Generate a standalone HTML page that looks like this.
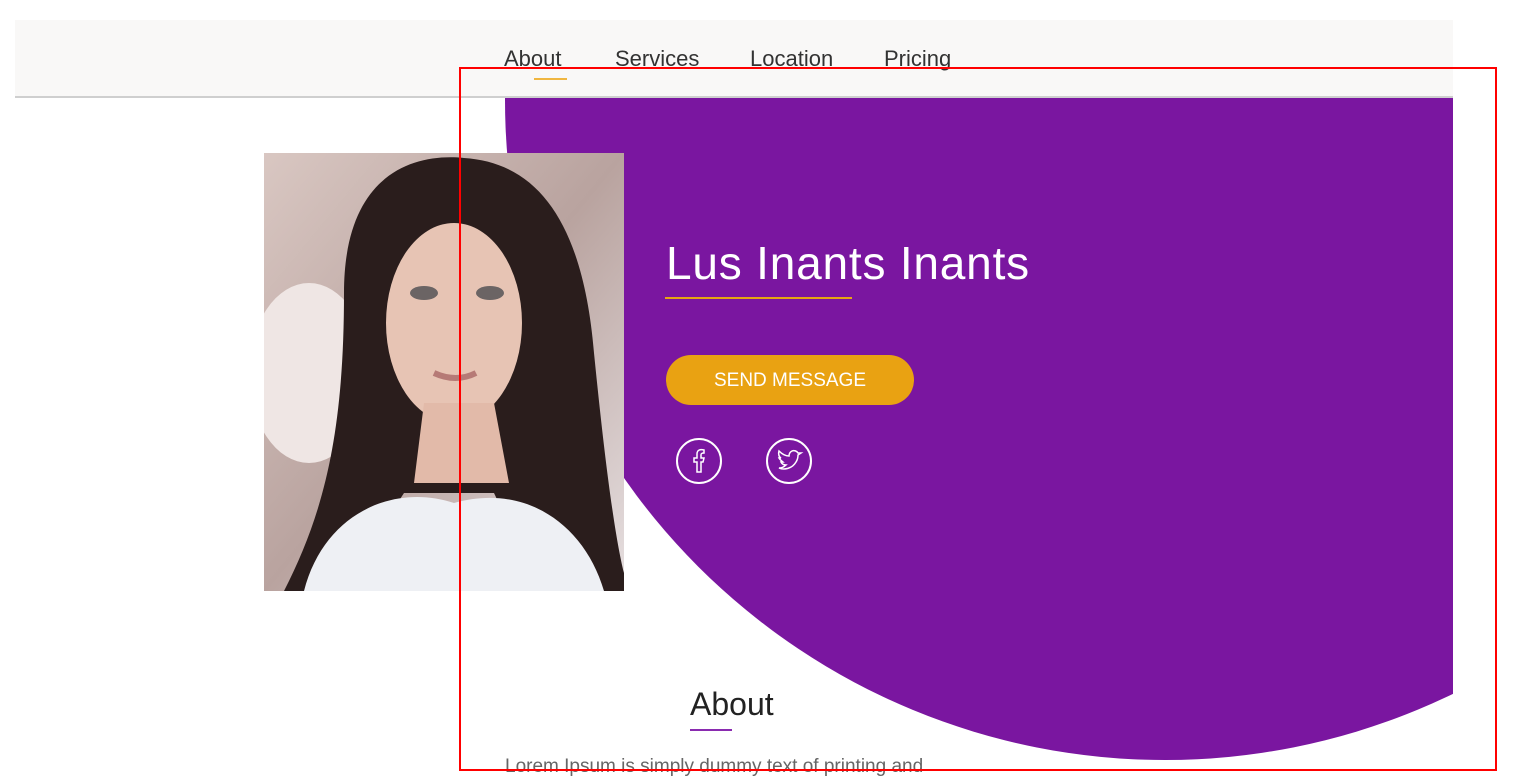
<!DOCTYPE html>
<html><head><meta charset="utf-8"><style>
html,body{margin:0;padding:0;width:1536px;height:773px;overflow:hidden;background:#fff;font-family:"Liberation Sans",sans-serif}
.wrap{position:absolute;left:15px;top:20px;width:1438px;height:753px;overflow:hidden}
.hdr{position:absolute;left:0;top:0;width:1438px;height:76px;background:#f9f8f7;border-bottom:2px solid #cfcfcf;z-index:2}
.nav a{position:absolute;top:26px;font-size:22px;color:#333;text-decoration:none}
.circle{position:absolute;left:490px;top:-580px;width:1320px;height:1320px;border-radius:50%;background:#7a16a0}
.title{position:absolute;left:666px;top:236px;font-size:46px;letter-spacing:0.8px;color:#fff;z-index:3}
.uline{position:absolute;left:665px;top:297px;width:187px;height:2px;background:#e6a612;z-index:3}
.btn{position:absolute;left:666px;top:355px;width:248px;height:50px;border-radius:25px;background:#e9a212;color:#fff;font-size:19px;text-align:center;line-height:52px;z-index:3}
.red{position:absolute;left:459px;top:67px;width:1034px;height:700px;border:2px solid #f00;z-index:5}
</style></head><body>
<div class="wrap">
<div class="circle"></div>
<div class="hdr"><div class="nav">
<a style="left:489px">About</a><a style="left:600px">Services</a><a style="left:735px">Location</a><a style="left:869px">Pricing</a>
<div style="position:absolute;left:519px;top:58px;width:33px;height:2px;background:#f0b640"></div>
</div></div>
</div>
<svg style="position:absolute;left:264px;top:153px" width="360" height="438" viewBox="0 0 360 438">
<defs><linearGradient id="bg" x1="0" y1="0" x2="1" y2="1"><stop offset="0" stop-color="#d9c7c2"/><stop offset=".5" stop-color="#b9a39f"/><stop offset="1" stop-color="#e6dfe0"/></linearGradient></defs>
<rect width="360" height="438" fill="url(#bg)"/>
<ellipse cx="45" cy="220" rx="60" ry="90" fill="#efe6e4"/>
<path d="M80 140 C80 20 150 0 200 5 C280 10 320 80 330 200 C340 300 350 380 360 420 L360 438 L300 438 C250 400 240 360 230 340 L140 340 C120 370 110 400 60 438 L20 438 C60 360 80 280 80 140Z" fill="#2a1d1c"/>
<ellipse cx="190" cy="170" rx="68" ry="100" fill="#e7c4b4"/>
<path d="M160 250 L230 250 L245 330 L150 330Z" fill="#e2baa9"/>
<path d="M40 438 C60 360 130 330 190 350 C260 330 320 370 340 438Z" fill="#eef0f4"/>
<ellipse cx="160" cy="140" rx="14" ry="7" fill="#6b6464"/><ellipse cx="226" cy="140" rx="14" ry="7" fill="#6b6464"/>
<path d="M170 220 Q192 230 212 220" stroke="#b67a76" stroke-width="6" fill="none"/>
</svg>
<div class="title">Lus Inants Inants</div>
<div class="uline"></div>
<div class="btn">SEND MESSAGE</div>
<svg style="position:absolute;left:676px;top:438px" width="140" height="48" viewBox="0 0 140 48" fill="none" stroke="#fff" stroke-width="2">
<circle cx="23" cy="23" r="22"/>
<path d="M21 34 V24 H18 V20 H21 V16 C21 12 24 11 28 12 V15 C25 15 25 16 25 17 V20 H28 L27 24 H25 V34Z" stroke-width="1.5"/>
<circle cx="113" cy="23" r="22"/>
<path d="M103 30 C108 32 116 31 120 24 C122 21 122 18 122 17 L125 15 L122 15 C121 13 118 12 116 13 C114 14 113 16 113 18 C109 18 106 16 103 13 C102 16 103 19 105 20 L103 20 C104 22 106 23 107 24 L105 24 C106 26 108 27 110 27 C108 29 105 30 103 30Z" stroke-width="1.5"/>
</svg>
<div style="position:absolute;left:690px;top:686px;font-size:32px;color:#222">About</div>
<div style="position:absolute;left:690px;top:729px;width:42px;height:2px;background:#8a2bb0"></div>
<div style="position:absolute;left:505px;top:756px;font-size:19px;color:#666">Lorem Ipsum is simply dummy text of printing and</div>
<div class="red"></div>
</body></html>
